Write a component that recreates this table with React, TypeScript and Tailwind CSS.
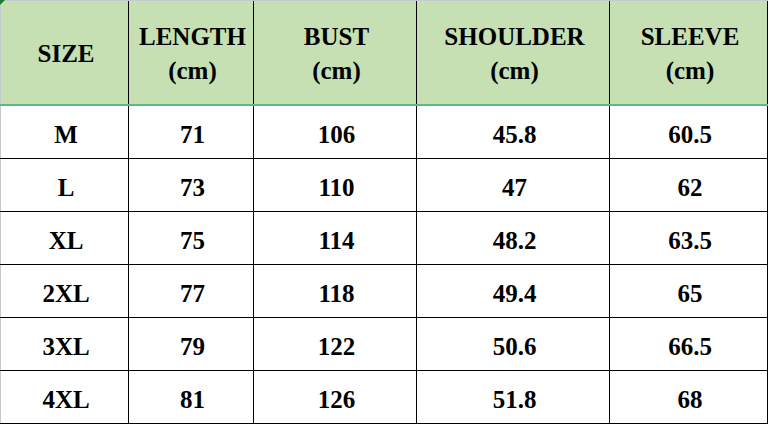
import React from "react";

const widths = ["w-[129px]", "w-[125px]", "w-[163px]", "w-[193px]", "w-[158px]"];

const header: [string, string?][] = [
  ["SIZE"],
  ["LENGTH", "(cm)"],
  ["BUST", "(cm)"],
  ["SHOULDER", "(cm)"],
  ["SLEEVE", "(cm)"],
];

const rows = [
  ["M", "71", "106", "45.8", "60.5"],
  ["L", "73", "110", "47", "62"],
  ["XL", "75", "114", "48.2", "63.5"],
  ["2XL", "77", "118", "49.4", "65"],
  ["3XL", "79", "122", "50.6", "66.5"],
  ["4XL", "81", "126", "51.8", "68"],
];

export default function App() {
  return (
    <div className="relative w-[770px] h-[425px] bg-white overflow-hidden text-black font-bold text-[25px] font-['Liberation_Serif','Times_New_Roman',serif]">
      <div className="absolute left-0 top-0 w-0 h-0 border-t-[5px] border-r-[5px] border-t-[#1e7b34] border-r-transparent" />
      <div className="flex flex-col w-[768px]">
        <div className="flex h-[104px] bg-[#c6e0b4] border-t border-[#c3c9cc]">
          {header.map(([a, b], i) => (
            <div
              key={i}
              className={`${widths[i]} ${i === 0 ? "border-l border-l-[#c3c9cc]" : ""} shrink-0 border-r border-r-black flex flex-col items-center justify-center pt-[3px] pl-[3px] leading-[34px]`}
            >
              <span>{a}</span>
              {b && <span>{b}</span>}
            </div>
          ))}
        </div>
        <div className="h-[2px] bg-[#5cb88a]" />
        {rows.map((r, ri) => (
          <div key={ri} className="flex h-[53px] border-b border-b-black">
            {r.map((c, i) => (
              <div
                key={i}
                className={`${widths[i]} ${i === 0 ? "border-l border-l-[#c3c9cc]" : ""} shrink-0 border-r border-r-black flex items-center justify-center pt-[5px] pl-[3px]`}
              >
                {c}
              </div>
            ))}
          </div>
        ))}
      </div>
    </div>
  );
}
